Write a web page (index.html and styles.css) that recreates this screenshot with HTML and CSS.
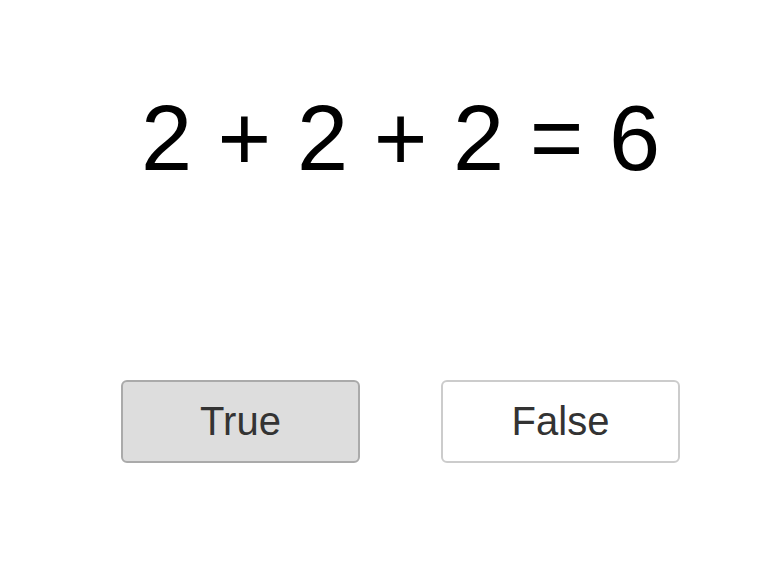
FILE: index.html
```html
<!DOCTYPE html>
<html lang="en">
<head>
<meta charset="utf-8">
<title>Quiz</title>
<link rel="stylesheet" href="styles.css">
</head>
<body>
<main class="quiz">
  <div class="equation">2 + 2 + 2 = 6</div>
  <div class="answers">
    <button class="answer answer-selected">True</button>
    <button class="answer">False</button>
  </div>
</main>
</body>
</html>
```

FILE: styles.css
```css
html, body {
  margin: 0;
  padding: 0;
  background: #ffffff;
}
body {
  font-family: "Liberation Sans", Arial, Helvetica, sans-serif;
}
.quiz {
  display: flex;
  flex-direction: column;
  align-items: center;
  padding-left: 33px;
  padding-top: 92px;
}
.equation {
  font-size: 92px;
  line-height: 1;
  color: #000;
  white-space: pre;
}
.answers {
  display: flex;
  gap: 81px;
  margin-top: 196px;
}
.answer {
  box-sizing: border-box;
  width: 239px;
  height: 83px;
  border: 2px solid #cccccc;
  border-radius: 6px;
  background: #ffffff;
  color: #333333;
  font-family: "Liberation Sans", Arial, Helvetica, sans-serif;
  font-size: 40px;
  line-height: 1;
  padding: 0 0 2px;
}
.answer-selected {
  background: #dddddd;
  border-color: #aaaaaa;
}
```
